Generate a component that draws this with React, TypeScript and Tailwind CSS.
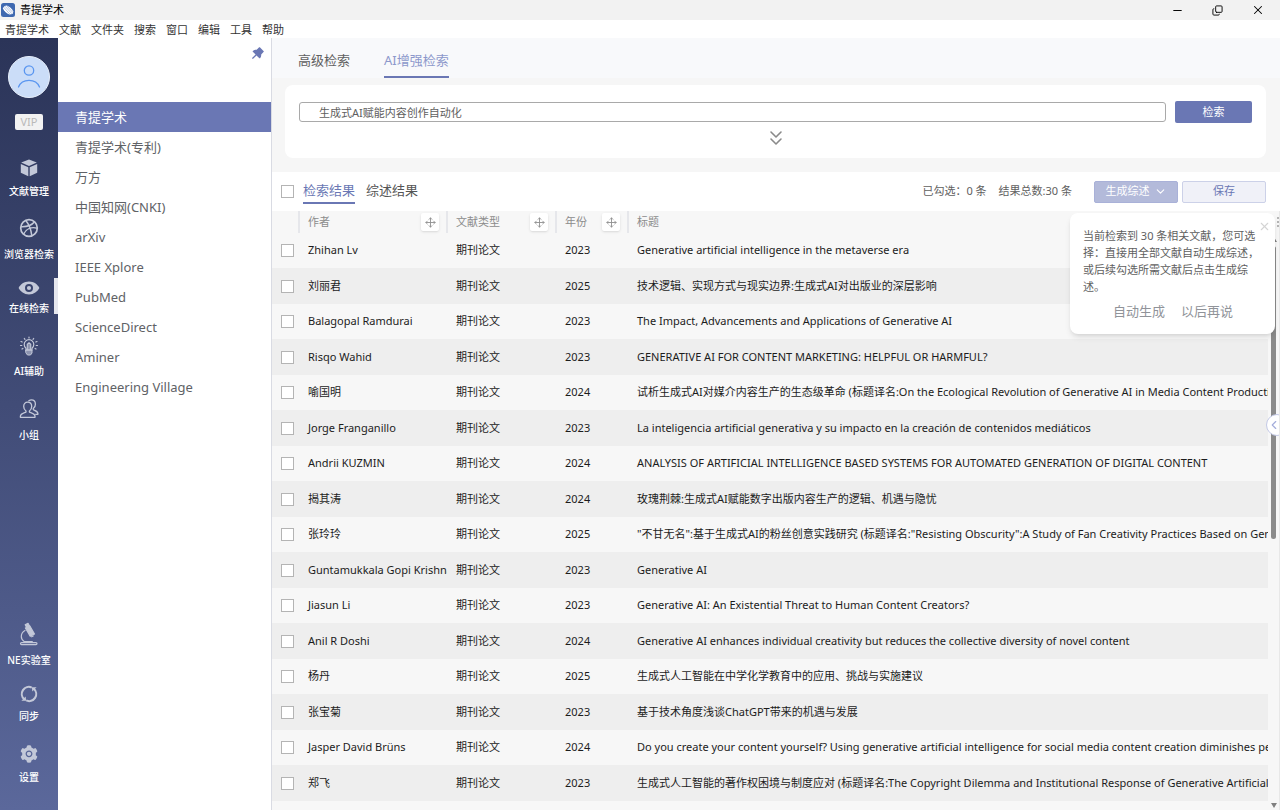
import { ChevronDown, ChevronLeft, ChevronsDown, Copy, Minus, Move, X } from 'lucide-react';
import { useState } from 'react';
import type { ReactNode } from 'react';
import { AiFillPushpin, AiFillSetting } from 'react-icons/ai';

const MENUS = ['青提学术', '文献', '文件夹', '搜索', '窗口', '编辑', '工具', '帮助'];

const SOURCES = [
  '青提学术',
  '青提学术(专利)',
  '万方',
  '中国知网(CNKI)',
  'arXiv',
  'IEEE Xplore',
  'PubMed',
  'ScienceDirect',
  'Aminer',
  'Engineering Village',
];

interface Paper {
  author: string;
  year: number;
  title: string;
}

const PAPERS: Paper[] = [
  { author: 'Zhihan Lv', year: 2023, title: 'Generative artificial intelligence in the metaverse era' },
  { author: '刘丽君', year: 2025, title: '技术逻辑、实现方式与现实边界:生成式AI对出版业的深层影响' },
  { author: 'Balagopal Ramdurai', year: 2023, title: 'The Impact, Advancements and Applications of Generative AI' },
  { author: 'Risqo Wahid', year: 2023, title: 'GENERATIVE AI FOR CONTENT MARKETING: HELPFUL OR HARMFUL?' },
  { author: '喻国明', year: 2024, title: '试析生成式AI对媒介内容生产的生态级革命 (标题译名:On the Ecological Revolution of Generative AI in Media Content Production)' },
  { author: 'Jorge Franganillo', year: 2023, title: 'La inteligencia artificial generativa y su impacto en la creación de contenidos mediáticos' },
  { author: 'Andrii KUZMIN', year: 2024, title: 'ANALYSIS OF ARTIFICIAL INTELLIGENCE BASED SYSTEMS FOR AUTOMATED GENERATION OF DIGITAL CONTENT' },
  { author: '揭其涛', year: 2024, title: '玫瑰荆棘:生成式AI赋能数字出版内容生产的逻辑、机遇与隐忧' },
  { author: '张玲玲', year: 2025, title: '"不甘无名":基于生成式AI的粉丝创意实践研究 (标题译名:"Resisting Obscurity":A Study of Fan Creativity Practices Based on Generative AI)' },
  { author: 'Guntamukkala Gopi Krishna', year: 2023, title: 'Generative AI' },
  { author: 'Jiasun Li', year: 2023, title: 'Generative AI: An Existential Threat to Human Content Creators?' },
  { author: 'Anil R Doshi', year: 2024, title: 'Generative AI enhances individual creativity but reduces the collective diversity of novel content' },
  { author: '杨丹', year: 2025, title: '生成式人工智能在中学化学教育中的应用、挑战与实施建议' },
  { author: '张宝菊', year: 2023, title: '基于技术角度浅谈ChatGPT带来的机遇与发展' },
  { author: 'Jasper David Brüns', year: 2024, title: 'Do you create your content yourself? Using generative artificial intelligence for social media content creation diminishes perceived brand authenticity' },
  { author: '郑飞', year: 2023, title: '生成式人工智能的著作权困境与制度应对 (标题译名:The Copyright Dilemma and Institutional Response of Generative Artificial Intelligence)' },
];

function CubeIcon() {
  return (
    <svg viewBox="0 0 20 20" className="h-5 w-5" fill="currentColor" aria-hidden="true">
      <path d="M10 1.5 17.8 4.6 10 8 2.2 4.6z" />
      <path d="M1.8 6.1 9.3 9.3v8.9L1.8 14.8z" />
      <path d="M18.2 6.1 10.7 9.3v8.9l7.5-3.4z" />
    </svg>
  );
}

function BallIcon() {
  return (
    <svg viewBox="0 0 20 20" className="h-5 w-5" fill="none" stroke="currentColor" strokeWidth="1.5" aria-hidden="true">
      <circle cx="10" cy="10" r="8.3" strokeWidth="1.7" />
      <path d="M6.8 2.500c3 3.600 5.200 8.300 6 15.200" />
      <path d="M1.800 8.700c5.700.3 10.600-1 13.800-4.900" />
      <path d="M4.500 16.200c2.500-5.300 7.800-7.700 13.800-6" />
    </svg>
  );
}

function EyeIcon() {
  return (
    <svg viewBox="0 0 22 20" className="h-5 w-[22px]" fill="currentColor" aria-hidden="true">
      <path
        fillRule="evenodd"
        d="M11 3.600c4.800 0 8.600 2.800 10.400 6.400-1.800 3.600-5.600 6.400-10.400 6.400S2.400 13.600.6 10C2.400 6.400 6.200 3.600 11 3.600zM11 6a4 4 0 1 0 0 8 4 4 0 0 0 0-8z"
      />
      <circle cx="11" cy="10" r="2.100" />
    </svg>
  );
}

function BulbIcon() {
  return (
    <svg viewBox="0 0 20 20" className="h-5 w-5" fill="none" stroke="currentColor" strokeWidth="1.2" strokeLinecap="round" aria-hidden="true">
      <path d="M7 14v-1.700C5.900 11.400 5.200 10 5.200 8.500a4.800 4.800 0 0 1 9.600 0c0 1.500-.7 2.900-1.800 3.800V14z" />
      <path d="M7 14h6v3l-1.500 2h-3L7 17z" fill="currentColor" fillOpacity=".6" strokeWidth="1" />
      <path d="M8.300 13.500V8.200L10 6.700l1.700 1.500v5.300M10 8.500v5" />
      <path d="M10 1v1M5.300 2.500l.7.900M14.700 2.500l-.7.900M2 5.500l1.200.5M18 5.500l-1.200.5M1.500 9.500h1.300M18.500 9.500h-1.300M3 13l.9-.5M17 13l-.9-.5" />
    </svg>
  );
}

function GroupIcon() {
  return (
    <svg viewBox="0 0 20 20" className="h-5 w-5" fill="none" stroke="currentColor" strokeWidth="1.3" strokeLinejoin="round" strokeLinecap="round" aria-hidden="true">
      <path d="M8.700 3.200c-2.500 0-4 1.800-4 4.300 0 1.900.9 3.500 2.300 4.500v1.100c-2 .9-5.600 1.500-5.600 4.100v1.100h14.600v-1.100c0-2.600-3.600-3.200-5.600-4.100V12c1.400-1 2.300-2.600 2.300-4.500 0-2.500-1.500-4.300-4-4.300z" />
      <path d="M9.800 1.700c.8-.5 1.700-.8 2.600-.8 2.500 0 4 1.900 4 4.300 0 1.800-.8 3.400-2.100 4.300v1.200c1.900.8 4.600 1.500 4.600 3.800v.8h-2.200" />
    </svg>
  );
}

function MicroscopeIcon() {
  return (
    <svg viewBox="0 0 20 24" className="h-6 w-5" fill="none" stroke="currentColor" strokeWidth="1.200" strokeLinecap="round" strokeLinejoin="round" aria-hidden="true">
      <path d="M6.200 2.800 9 1.300l1.200 2.200-2.800 1.500z" fill="currentColor" />
      <path d="M6.400 6 10.700 3.700l4.800 8.300-4.300 2.300z" fill="currentColor" />
      <path d="m12.600 14.800 1.600-.8" />
      <path d="M6 8.600C3.600 10 2.300 12 2.300 14.600c0 2.200 1.200 3.900 2.800 4.900h8.200" />
      <rect x="1.500" y="20.600" width="16.500" height="2" rx="1" />
    </svg>
  );
}

function SyncIcon() {
  return (
    <svg viewBox="0 0 20 20" className="h-5 w-5" fill="none" stroke="currentColor" strokeWidth="2.100" aria-hidden="true">
      <path d="M5.200 15.200A7 7 0 0 1 12.800 3.600" />
      <path d="M14.800 4.800A7 7 0 0 1 7.200 16.400" />
      <path d="M2.400 16.700h4.700l-.4-4.200zM17.600 3.300h-4.700l.4 4.200z" fill="currentColor" stroke="none" />
    </svg>
  );
}

function LogoIcon() {
  return (
    <svg viewBox="0 0 14 14" className="h-3.5 w-3.5" aria-hidden="true">
      <rect width="14" height="14" rx="2.500" fill="#3f69b0" />
      <path d="M1.800 5.300C2.600 3.600 4 2.500 5.800 2.400 8.500 3.300 11 5.600 12.300 8.400L11.600 11l-3.200.5C5.300 10.300 3 8.200 1.800 5.300z" fill="#fff" />
      <path d="M2.800 4.300 9 11.300M4.200 3.300l6.600 7.400M5.700 2.700l6 6.600" stroke="#7d9bd0" strokeWidth=".6" />
    </svg>
  );
}

interface NavItemProps {
  label: string;
  icon: ReactNode;
  className: string;
  active?: boolean;
}

function NavItem({ label, icon, className, active }: NavItemProps) {
  return (
    <button type="button" className={`relative flex w-full flex-col items-center ${className}`}>
      <span className="flex h-5 items-center justify-center text-[#c3c8d8]">{icon}</span>
      <span className="text-[10px] leading-4 font-medium whitespace-nowrap text-white">{label}</span>
      {active && <span className="absolute right-0 top-0 h-9 w-1 bg-[#e6e7ee]" />}
    </button>
  );
}

function NavRail() {
  return (
    <nav className="flex w-[58px] shrink-0 flex-col items-center bg-linear-to-b from-[#2b3458] to-[#5b689b] pt-[18px] pb-[25px]">
      <button
        type="button"
        aria-label="账户"
        className="flex h-[42px] w-[42px] shrink-0 items-center justify-center rounded-full border border-[#e8f0fc] bg-[#cbddf8] text-[#5a96f0]"
      >
        <svg viewBox="0 0 24 24" className="h-6 w-6" fill="none" stroke="currentColor" strokeWidth="1.300" strokeLinecap="round" aria-hidden="true">
          <circle cx="12" cy="5.500" r="4.700" />
          <path d="M1.500 22c1.600-4 5.700-6.600 10.500-6.600S20.900 18 22.500 22" />
        </svg>
      </button>
      <span className="mt-4 mb-7 h-4 w-7 shrink-0 rounded-xs bg-[#f2f2f2] text-center text-[11px] leading-4 text-[#b9b9b9]">VIP</span>
      <NavItem label="文献管理" icon={<CubeIcon />} className="mb-[19px] gap-[5px]" />
      <NavItem label="浏览器检索" icon={<BallIcon />} className="mb-4 gap-2" />
      <NavItem label="在线检索" icon={<EyeIcon />} className="mb-5 gap-0.5" active />
      <NavItem label="AI辅助" icon={<BulbIcon />} className="mb-5 gap-[7px]" />
      <NavItem label="小组" icon={<GroupIcon />} className="gap-2" />
      <div className="mt-auto w-full">
        <NavItem label="NE实验室" icon={<MicroscopeIcon />} className="mb-4 gap-2" />
        <NavItem label="同步" icon={<SyncIcon />} className="mb-5 gap-1" />
        <NavItem label="设置" icon={<AiFillSetting size={20} />} className="gap-[5px]" />
      </div>
    </nav>
  );
}

function SourcePanel() {
  const [selected, setSelected] = useState(SOURCES[0]);

  return (
    <aside className="w-[214px] shrink-0 border-r border-[#d9dbe3] bg-white">
      <div className="flex h-16 items-start justify-end px-[5px] pt-[7px]">
        <button type="button" aria-label="固定" className="text-[#6a77b4]">
          <AiFillPushpin size={16} />
        </button>
      </div>
      <ul>
        {SOURCES.map((name) => (
          <li key={name}>
            <button
              type="button"
              onClick={() => setSelected(name)}
              className={`block h-[30px] w-full px-[17px] pt-0.5 text-left text-[13px] ${
                selected === name ? 'bg-[#6a77b4] text-white' : 'text-[#606266]'
              }`}
            >
              {name}
            </button>
          </li>
        ))}
      </ul>
    </aside>
  );
}

function Tick({ label }: { label: string }) {
  return (
    <input
      type="checkbox"
      aria-label={label}
      className="block h-[13px] w-[13px] shrink-0 appearance-none border border-[#b4b4b4] bg-white checked:bg-[#6a77b4]"
    />
  );
}

function SearchArea() {
  const [query, setQuery] = useState('生成式AI赋能内容创作自动化');

  return (
    <section className="bg-[#f6f6f6] pb-3.5">
      <div className="flex h-10 items-stretch gap-[34px] bg-[#f8f9fb] px-[26px] text-[13px] text-[#606060]">
        <button type="button" className="pt-1.5">高级检索</button>
        <button type="button" className="border-b-2 border-[#6a77b4] pt-2 text-[#8c98cb]">AI增强检索</button>
      </div>
      <div className="mx-3.5 mt-[7px] ml-[13px] rounded-lg bg-white px-3.5 pt-4 pb-2">
        <form className="flex items-center gap-[9px]" onSubmit={(e) => e.preventDefault()}>
          <input
            type="text"
            aria-label="检索内容"
            value={query}
            onChange={(e) => setQuery(e.target.value)}
            className="h-5 min-w-0 flex-1 rounded-[3px] border border-[#a9a9a9] bg-white px-[19px] text-[11px] text-[#606060] outline-none"
          />
          <button type="submit" className="h-[22px] w-[77px] rounded-xs bg-[#6a77b4] text-[11px] text-white">
            检索
          </button>
        </form>
        <button type="button" aria-label="展开" className="mx-auto mt-[3px] block text-[#8a8a8a]">
          <ChevronsDown size={24} strokeWidth={1.6} />
        </button>
      </div>
    </section>
  );
}

function ResultBar() {
  return (
    <div className="flex h-[39px] shrink-0 items-center bg-white pr-3.5 pl-[9px] text-[13px]">
      <Tick label="全选" />
      <div className="ml-[9px] flex gap-[11px]">
        <button type="button" className="h-6 border-b-2 border-[#6a77b4] text-[#6a77b4]">检索结果</button>
        <button type="button" className="h-6 border-b-2 border-transparent text-[#555]">综述结果</button>
      </div>
      <div className="ml-auto flex items-center text-[11px] text-[#606060]">
        <span className="mr-3">已勾选：0 条</span>
        <span className="mr-[22px]">结果总数:30 条</span>
        <button type="button" className="mr-1 flex h-[22px] w-[84px] items-center justify-center gap-1 rounded-xs border border-[#a9b1d8] bg-[#b3bada] text-white">
          生成综述
          <ChevronDown size={13} />
        </button>
        <button type="button" className="h-[22px] w-[84px] rounded-xs border border-[#ccd1e8] bg-[#f0f1f8] text-[#6a77b4]">
          保存
        </button>
      </div>
    </div>
  );
}

function HeaderCell({ label, movable = true }: { label: string; movable?: boolean }) {
  return (
    <th scope="col" className="border-l-2 border-[#e6e7eb] p-0 pr-[7px] pl-2 text-left font-normal text-[#8c8c8c]">
      <div className="flex items-center justify-between">
        {label}
        {movable && (
          <button
            type="button"
            aria-label={`移动${label}`}
            className="flex h-[18px] w-[18px] items-center justify-center rounded-xs bg-white text-[#909090] shadow-sm"
          >
            <Move size={11} />
          </button>
        )}
      </div>
    </th>
  );
}

function ResultTable() {
  return (
    <table className="w-full table-fixed border-collapse text-[11px]">
      <colgroup>
        <col className="w-[27px]" />
        <col className="w-[148px]" />
        <col className="w-[109px]" />
        <col className="w-[72px]" />
        <col />
      </colgroup>
      <thead>
        <tr className="h-[22px]">
          <td className="p-0" />
          <HeaderCell label="作者" />
          <HeaderCell label="文献类型" />
          <HeaderCell label="年份" />
          <HeaderCell label="标题" movable={false} />
        </tr>
      </thead>
      <tbody className="text-[#1c1c1c]">
        {PAPERS.map(({ author, year, title }) => (
          <tr key={title} className="h-[35px] even:h-[36px] even:bg-[#eeeeee]">
            <td className="p-0 pl-[9px]">
              <Tick label={title} />
            </td>
            <td className="overflow-hidden p-0 pl-[9px] whitespace-nowrap">{author}</td>
            <td className="p-0 pl-[9px] whitespace-nowrap">期刊论文</td>
            <td className="p-0 pl-[9px]">{year}</td>
            <td className="overflow-hidden p-0 pl-[9px] whitespace-nowrap">{title}</td>
          </tr>
        ))}
      </tbody>
    </table>
  );
}

function SummaryTip({ onClose }: { onClose: () => void }) {
  return (
    <div role="dialog" aria-label="生成综述" className="absolute top-0.5 right-1 w-[205px] rounded-lg bg-white pt-3.5 pb-3 pl-[13px] shadow-md">
      <button type="button" aria-label="关闭" onClick={onClose} className="absolute top-[7px] right-1 text-[#d4d4d4]">
        <X size={13} />
      </button>
      <p className="w-[177px] text-[11px] leading-[17px] text-[#606060]">
        当前检索到 30 条相关文献，您可选择：直接用全部文献自动生成综述，或后续勾选所需文献后点击生成综述。
      </p>
      <div className="mt-[7px] flex justify-center gap-4 pr-3 text-[13px] text-[#909399]">
        <button type="button" onClick={onClose}>自动生成</button>
        <button type="button" onClick={onClose}>以后再说</button>
      </div>
    </div>
  );
}

export default function App() {
  const [tipOpen, setTipOpen] = useState(true);

  return (
    <div className="flex h-screen flex-col overflow-hidden bg-white font-['Noto_Sans','Noto_Sans_CJK_SC',sans-serif] text-[11px] text-[#333]">
      <header className="flex h-5 shrink-0 items-center bg-[#f2f2f2] px-px">
        <LogoIcon />
        <h1 className="ml-[5px] text-[11px] text-black">青提学术</h1>
        <div className="mr-3.5 ml-auto flex items-center gap-7 text-black">
          <button type="button" aria-label="最小化"><Minus size={13} strokeWidth={1.8} /></button>
          <button type="button" aria-label="还原" className="rotate-90 -scale-x-100">
            <Copy size={11} strokeWidth={2} className="-rotate-90" />
          </button>
          <button type="button" aria-label="关闭窗口"><X size={14} strokeWidth={1.8} /></button>
        </div>
      </header>
      <div className="flex h-[18px] shrink-0 items-center gap-2.5 bg-white px-[5px] pt-0.5">
        {MENUS.map((menu) => (
          <button key={menu} type="button">{menu}</button>
        ))}
      </div>

      <div className="flex min-h-0 flex-1">
        <NavRail />
        <SourcePanel />
        <main className="flex min-w-0 flex-1 flex-col">
          <SearchArea />
          <ResultBar />
          <div className="relative flex min-h-0 flex-1 overflow-hidden border-r border-[#e8e8e8] bg-[#f7f7f7]">
            <div className="min-w-0 flex-1 overflow-hidden">
              <ResultTable />
            </div>
            <div className="flex w-[11px] shrink-0 flex-col items-center pt-[26px] pb-0.5 text-[#808080]">
              <svg viewBox="0 0 6 5" className="h-[5px] w-1.5" fill="currentColor" aria-hidden="true"><path d="M3 0 6 5H0z" /></svg>
              <div className="my-1 min-h-0 w-full flex-1 px-[3px]">
                <div className="h-[53%] rounded-full bg-[#8b8b8b]" />
              </div>
              <svg viewBox="0 0 6 5" className="h-[5px] w-1.5" fill="currentColor" aria-hidden="true"><path d="M3 5 6 0H0z" /></svg>
            </div>
            <svg viewBox="0 0 2 10" className="absolute top-1.5 right-0 h-2.5 w-0.5" fill="#b5b5b5" aria-hidden="true">
              <path d="M0 0h2v2H0zM0 4h2v2H0zM0 8h2v2H0z" />
            </svg>
            <button
              type="button"
              aria-label="展开详情"
              className="absolute top-[203px] -right-[9px] flex h-[22px] w-[22px] items-center rounded-full border border-[#c3c9e6] bg-white text-[#a4addb]"
            >
              <ChevronLeft size={14} />
            </button>
            {tipOpen && <SummaryTip onClose={() => setTipOpen(false)} />}
          </div>
        </main>
      </div>
    </div>
  );
}
